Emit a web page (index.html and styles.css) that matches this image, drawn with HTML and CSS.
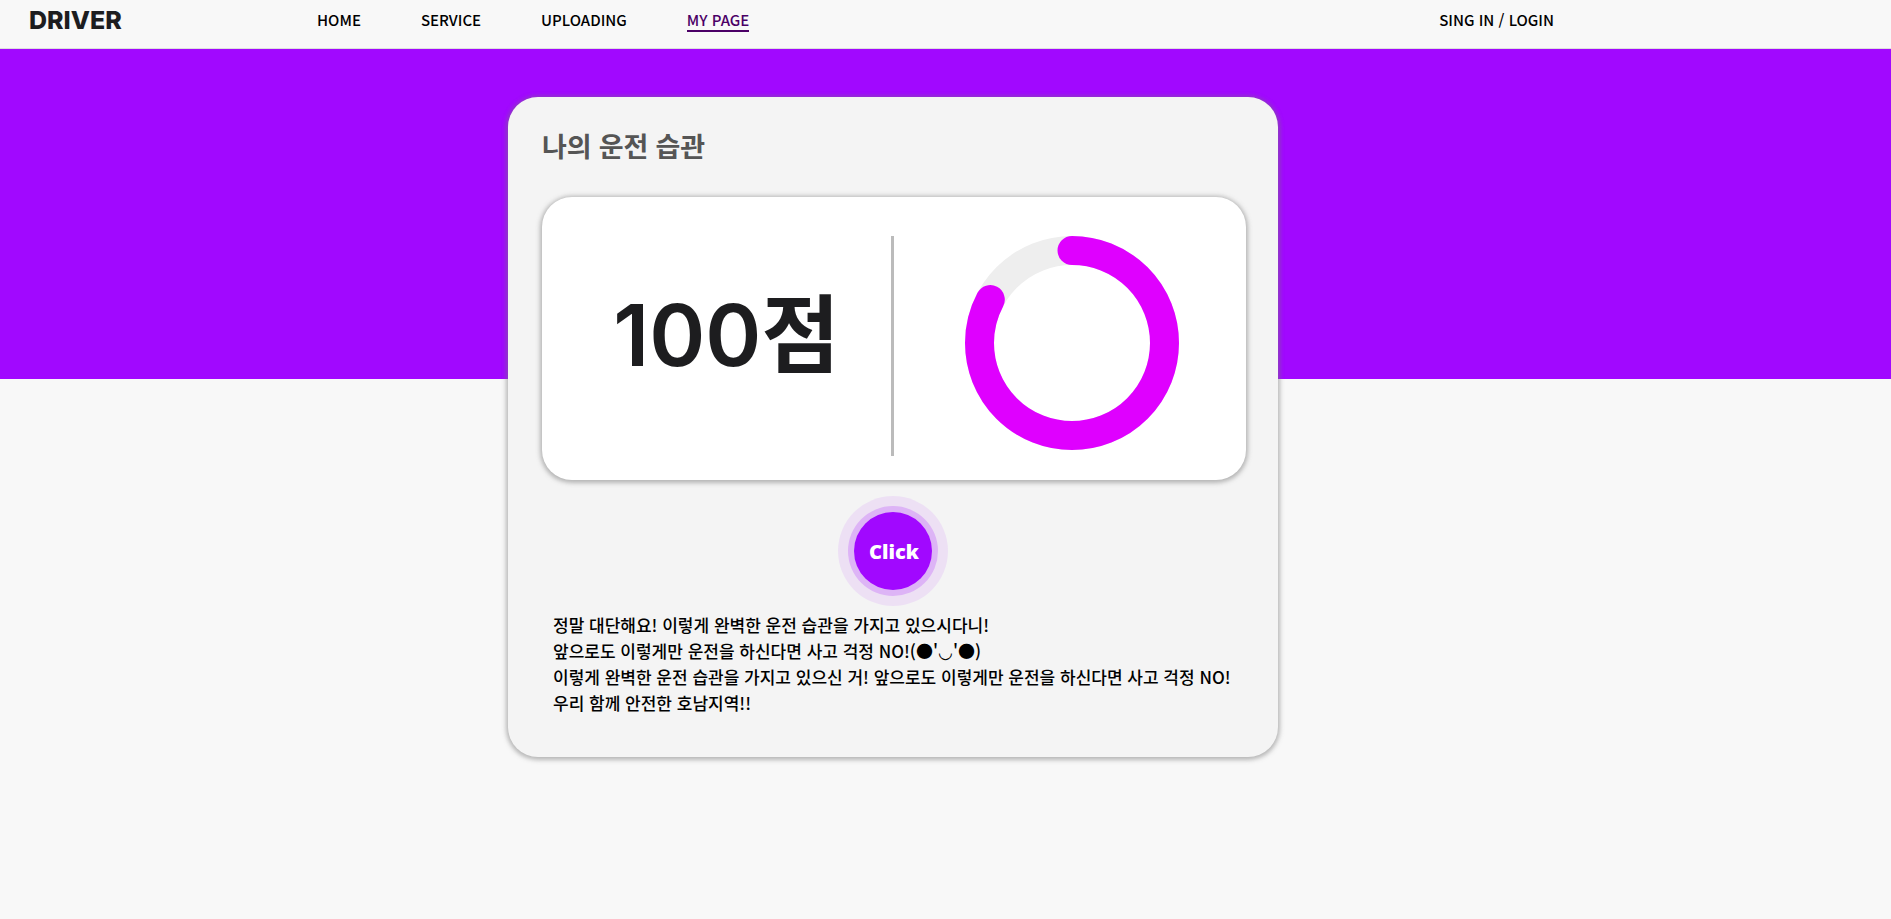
FILE: index.html
```
<!DOCTYPE html>
<html lang="ko">
<head>
<meta charset="utf-8">
<title>DRIVER</title>
<link rel="stylesheet" href="styles.css">
</head>
<body>
<header class="header">
  <a class="logo" href="#">DRIVER</a>
  <nav class="nav">
    <a href="#">HOME</a>
    <a href="#">SERVICE</a>
    <a href="#">UPLOADING</a>
    <a class="active" href="#">MY PAGE</a>
  </nav>
  <a class="login" href="#">SING IN / LOGIN</a>
</header>
<main class="main">
  <section class="card">
    <h1 class="title">나의 운전 습관</h1>
    <div class="result">
      <p class="score">100점</p>
      <div class="chart">
        <svg width="214" height="214" viewBox="0 0 214 214" role="img" aria-label="83%">
          <circle class="track" cx="107" cy="107" r="92.5"/>
          <circle class="value" cx="107" cy="107" r="92.5" pathLength="360" stroke-dasharray="298 360" transform="rotate(-90 107 107)"/>
        </svg>
      </div>
    </div>
    <button class="click" type="button">Click</button>
    <p class="comment">정말 대단해요! 이렇게 완벽한 운전 습관을 가지고 있으시다니!<br>앞으로도 이렇게만 운전을 하신다면 사고 걱정 NO!(●'◡'●)<br>이렇게 완벽한 운전 습관을 가지고 있으신 거! 앞으로도 이렇게만 운전을 하신다면 사고 걱정 NO!<br>우리 함께 안전한 호남지역!!</p>
  </section>
</main>
</body>
</html>
```
FILE: styles.css
```
* {
  box-sizing: border-box;
}

body {
  margin: 0;
  background: #f8f8f8;
  color: #000;
  font-family: "Noto Sans", "Noto Sans CJK KR", sans-serif;
}

a {
  color: inherit;
  text-decoration: none;
}

.header {
  display: flex;
  align-items: center;
  height: 49px;
  padding: 0 337px 8px 29px;
  border-bottom: 1px solid #ddd;
  font-family: "Noto Sans CJK KR", sans-serif;
  font-size: 15px;
  font-weight: 500;
  line-height: 20px;
}

.logo {
  width: 288px;
  color: #1d1d1f;
  font-family: Inter, sans-serif;
  font-size: 25px;
  font-weight: 800;
}

.nav {
  display: flex;
  gap: 60px;
}

.nav .active {
  color: #4b0066;
  box-shadow: 0 2px #4b0066;
}

.login {
  margin-left: auto;
}

.main {
  padding: 48px 613px 48px 508px;
  background: linear-gradient(#a108ff 330px, transparent 330px);
}

.card {
  display: flex;
  flex-direction: column;
  padding: 30px 32px 41px 34px;
  border-radius: 30px;
  background: #f4f4f4;
  box-shadow: 0 1px 4px 2px rgba(120, 120, 120, 0.5);
}

.title {
  margin: 0;
  color: #555;
  font-size: 27px;
  font-weight: 700;
  line-height: 40px;
}

.result {
  display: grid;
  grid-template-columns: 1fr 1fr;
  margin-top: 30px;
  padding: 39px 0 24px;
  border-radius: 30px;
  background: #fff;
  box-shadow: 0 1px 4px 2px rgba(120, 120, 120, 0.5);
}

.score {
  margin: 0;
  padding: 0 0 20px 20px;
  border-right: 3px solid #bbb;
  color: #1d1d1f;
  font-family: Inter, "Noto Sans CJK KR", sans-serif;
  font-size: 85px;
  font-weight: 600;
  line-height: 200px;
  text-align: center;
}

.chart {
  padding-left: 4px;
  text-align: center;
}

.track,
.value {
  fill: none;
  stroke: #eee;
  stroke-width: 29;
}

.value {
  stroke: #df00ff;
  stroke-linecap: round;
}

.click {
  align-self: center;
  width: 78px;
  height: 78px;
  margin: 32px 2px 0 0;
  padding: 0 0 0 2px;
  border: 0;
  border-radius: 50%;
  background: #a108ff;
  box-shadow: 0 0 0 6px rgba(160, 6, 255, 0.2), 0 0 0 16px rgba(160, 6, 255, 0.08);
  color: #fff;
  font-family: "Noto Sans", sans-serif;
  font-size: 20px;
  font-weight: 900;
}

.comment {
  margin: 22px 0 0 11px;
  font-family: "Noto Sans CJK KR", sans-serif;
  font-size: 17px;
  font-weight: 500;
  line-height: 26px;
  white-space: nowrap;
}
```
